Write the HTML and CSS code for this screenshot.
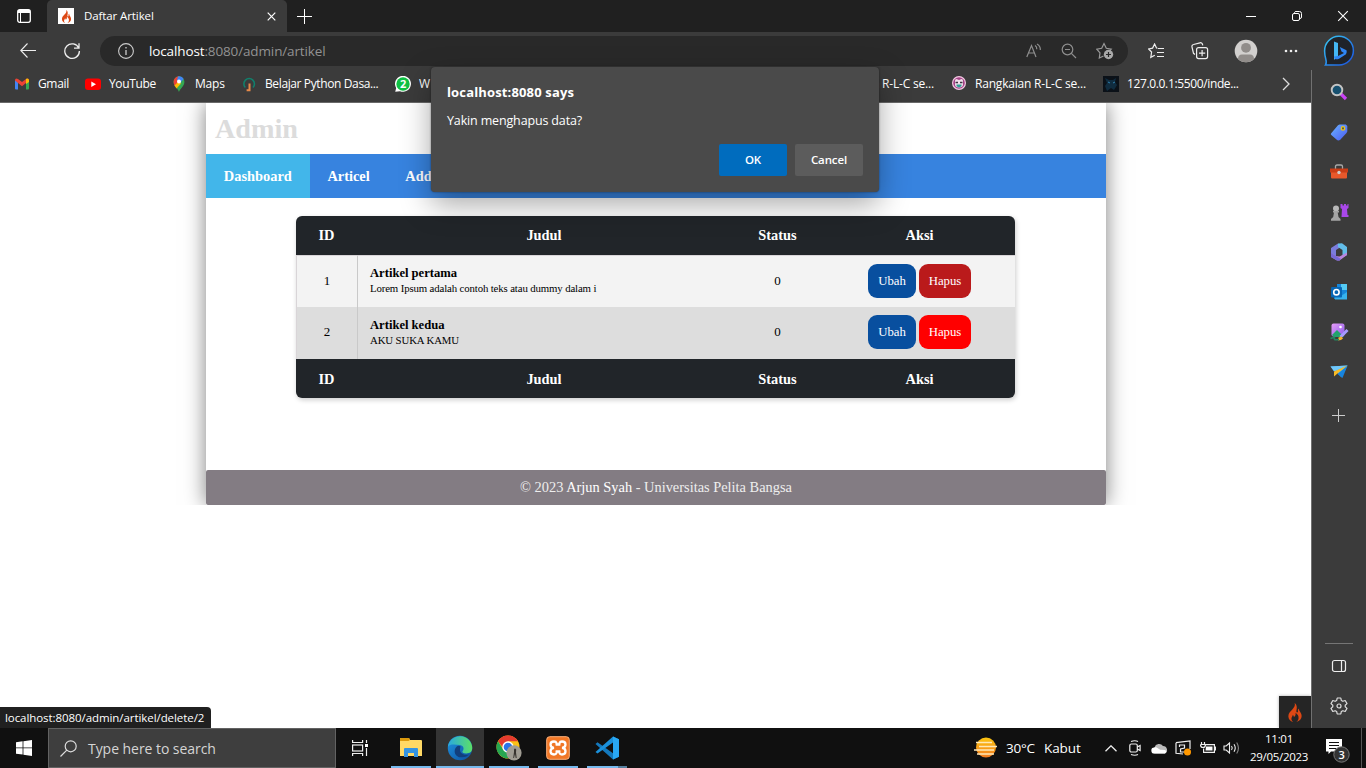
FILE: index.html
```html
<!DOCTYPE html>
<html lang="id">
<head>
<meta charset="utf-8">
<title>Daftar Artikel</title>
<link rel="stylesheet" href="styles.css">
</head>
<body>
<svg width="0" height="0" class="defs">
  <defs>
    <symbol id="flame" viewBox="0 0 16 20"><path d="M7.6 0c.9 2.600-.3 4.300-2 6.300C3.400 8.800 1 10.600 1 13.900 1 17 3.200 19.200 6 20c-1.600-1.200-2.100-2.900-1.500-4.700.4-1.100 1-1.700 1.200-2.800.9.600 1.200 1.500 1.100 2.500 1.500-1.100 2.300-2.700 1.700-4.700 2.400 1.400 3.600 3.700 3.200 6.100-.2 1.500-1 2.600-2.300 3.600 3.500-.9 5.600-3.200 5.600-6.300 0-2.400-1.300-3.900-2.200-5.300-.6-1-.7-1.700-.5-2.600-1 .5-1.500 1.500-1.200 2.700.1.800-.2 1.300-.8 1.400-.8 0-1-.8-.8-1.900C10.200 5 10.300 2 7.600 0Z"/></symbol>
    <linearGradient id="bing" x1="0" y1="0" x2="1" y2="1"><stop offset="0" stop-color="#39c9f2"/><stop offset="1" stop-color="#1a50e0"/></linearGradient>
    <linearGradient id="edge" x1="0" y1="0" x2="1" y2="0"><stop offset="0" stop-color="#2aa8df"/><stop offset="1" stop-color="#5be068"/></linearGradient>
    <linearGradient id="edge-low" x1="0" y1="0" x2="1" y2="1"><stop offset="0" stop-color="#2096e2"/><stop offset="1" stop-color="#0c4e9e"/></linearGradient>
    <linearGradient id="tag" x1="0" y1="0" x2="1" y2="1"><stop offset="0" stop-color="#6bb4ff"/><stop offset="1" stop-color="#4b5bf2"/></linearGradient>
    <linearGradient id="sun" x1="0" y1="0" x2="0" y2="1"><stop offset="0" stop-color="#fcc510"/><stop offset="1" stop-color="#f47b20"/></linearGradient>
    <linearGradient id="purple" x1="0" y1="0" x2="1" y2="1"><stop offset="0" stop-color="#e79cf8"/><stop offset="1" stop-color="#8a5bea"/></linearGradient>
  </defs>
</svg>
<div class="screen">
  <header class="tabs">
    <svg class="workspaces" width="14" height="14" viewBox="0 0 14 14"><rect x=".7" y=".7" width="12.600" height="12.600" rx="2" fill="none" stroke="#fff" stroke-width="1.300"/><path d="M1 1h12v3H1z" fill="#fff"/><path d="M3.500 4v9" stroke="#fff"/></svg>
    <div class="tab">
      <span class="favicon"><svg width="11" height="13"><use href="#flame" fill="#dd4814"/></svg></span>
      <span class="tab-title">Daftar Artikel</span>
      <svg width="9" height="9" viewBox="0 0 9 9" stroke="#fff" stroke-width="1.200"><path d="M.7.7l7.600 7.600M8.300.7.700 8.300"/></svg>
    </div>
    <svg class="new-tab" width="15" height="15" viewBox="0 0 15 15" stroke="#fff"><path d="M7.500 0v15M0 7.500h15"/></svg>
    <div class="window-buttons">
      <svg width="12" height="12" viewBox="0 0 12 12" stroke="#fff"><path d="M1 6.500h10"/></svg>
      <svg width="12" height="12" viewBox="0 0 12 12" stroke="#fff" fill="none"><rect x="1.500" y="3.500" width="7" height="7" rx="1.500"/><path d="M3.500 3V2.500a1.500 1.500 0 0 1 1.500-1h3.500a2 2 0 0 1 2 2V7a1.500 1.500 0 0 1-1.500 1.500"/></svg>
      <svg width="12" height="12" viewBox="0 0 12 12" stroke="#fff" stroke-width="1.100"><path d="M1.200 1.200l9.600 9.600M10.800 1.200l-9.600 9.600"/></svg>
    </div>
  </header>

  <div class="toolbar">
    <svg class="back" width="16" height="16" viewBox="0 0 16 16" fill="none" stroke="#eee" stroke-width="1.100"><path d="M16 7.500H.8M7.500.5.8 7.500l6.700 7"/></svg>
    <svg class="reload" width="18" height="18" viewBox="0 0 18 18" fill="none" stroke="#eee" stroke-width="1.300"><path d="M15.800 6.200A7.300 7.300 0 1 0 16.400 9M16 1.200v5h-5"/></svg>
    <div class="address">
      <svg width="16" height="16" viewBox="0 0 16 16" fill="none" stroke="#ccc" stroke-width="1.100"><circle cx="8" cy="8" r="7.400"/><path d="M8 7v5M8 4v1.500" stroke-width="1.300"/></svg>
      <span class="url"><b>localhost</b>:8080/admin/artikel</span>
      <div class="address-actions">
        <svg width="16" height="16" viewBox="0 0 16 16" fill="none" stroke="#8e8e8e" stroke-width="1.200"><path d="M.8 14 5.500 2.500 10 14M2.400 10h6M9 2.500q2 1.200 1.800 3.700M11 1q3.600 1.800 3.300 6"/></svg>
        <svg width="16" height="16" viewBox="0 0 16 16" fill="none" stroke="#8e8e8e" stroke-width="1.200"><circle cx="6.500" cy="6.500" r="5.300"/><path d="M10.400 10.400l4.600 4.600M4 6.500h5"/></svg>
        <svg width="18" height="18" viewBox="0 0 18 18" fill="none" stroke="#9a9a9a" stroke-width="1.200"><path d="M7.500 14 3.300 16l.7-5.100L.8 7.200l4.900-.9L8 1.600l2.300 4.700 4.900.8-2 2"/><circle cx="12.500" cy="12.500" r="4.700" fill="#a9a9a9" stroke="none"/><path d="M12.500 10v5M10 12.500h5" stroke="#292929"/></svg>
      </div>
    </div>
    <div class="toolbar-actions">
      <svg width="18" height="16" viewBox="0 0 18 16" fill="none" stroke="#eee" stroke-width="1.200"><path d="M9.500 5.300 8.500 5 6.600 1 4.600 5.100l-4 .8 3 3.100-.8 5.300 4-2.100M10 5.500h6M9 9.500h7M9 13.500h7"/></svg>
      <svg width="18" height="18" viewBox="0 0 18 18" fill="none" stroke="#eee" stroke-width="1.200"><path d="M4 12.500 2.500 11.300 1 5a2 2 0 0 1 1.500-2.500L9 .8a2 2 0 0 1 2.500 1.500l.3 1"/><rect x="5.600" y="5.600" width="11" height="11" rx="2"/><path d="M11.100 8v6.200M8 11.100h6.200"/></svg>
      <svg width="24" height="24" viewBox="0 0 24 24"><circle cx="12" cy="12" r="11.300" fill="#d2d0ce"/><circle cx="12" cy="8.800" r="4.900" fill="#918d8a"/><path d="M4 20q0-4.500 4-4.500h8q4 0 4 4.500-3.500 3.300-8 3.300T4 20Z" fill="#918d8a"/></svg>
      <svg width="14" height="4" viewBox="0 0 14 4" fill="#eee"><circle cx="2" cy="2" r="1.300"/><circle cx="7" cy="2" r="1.300"/><circle cx="12" cy="2" r="1.300"/></svg>
    </div>
    <svg class="bing" width="32" height="32" viewBox="0 0 32 32"><path d="M2.500 30C5 26.500 1.600 24 1.600 16A14.400 14.400 0 1 1 16 30Z" fill="#1f2329" stroke="url(#bing)" stroke-width="1.500"/><path d="M11 6.500 15 8v13l-4 4Z" fill="#45b8f5"/><path d="M11 21.500q.5 4 5 2.300l7-4.500q1.300-1.800.5-4L16.800 12l1.700 4.500 2.500 1.500-6 3Z" fill="#2f86f3"/></svg>
  </div>

  <div class="middle">
    <div class="main">
      <nav class="bookmarks">
        <span class="bm gmail"><svg width="16" height="16" viewBox="0 0 16 16"><path d="M1 4h3v9.500H2a1 1 0 0 1-1-1Z" fill="#4285f4"/><path d="M12 4h3v8.500a1 1 0 0 1-1 1h-2Z" fill="#34a853"/><path d="M1 4.500Q1 1.500 4 3l4 3 4-3q3-1.500 3 1.500L8 10.200Z" fill="#ea4335"/><path d="m12 3 1-.5q2 0 2 2v1.400l-3 2Z" fill="#fbbc04"/></svg>Gmail</span>
        <span class="bm youtube"><svg width="16" height="16" viewBox="0 0 16 16"><rect y="2.500" width="16" height="11.500" rx="3" fill="#f00"/><path d="m6.300 5.500 4.700 2.700-4.700 2.700Z" fill="#fff"/></svg>YouTube</span>
        <span class="bm maps"><svg width="16" height="16" viewBox="0 0 16 16"><path d="M8 16c-.5-3-5.400-5.500-5.400-10.300A5.400 5.400 0 0 1 13.400 5.700C13.400 10.500 8.500 13 8 16Z" fill="#34a853"/><path d="M2.600 6A5.400 5.400 0 0 1 8 .3L8 6 4 10.500Q2.600 8 2.600 6Z" fill="#ea4335"/><path d="M7 .4q4-.8 5.700 2.600L8 8 6 4Z" fill="#4285f4"/><path d="m3.500 9.500 4-4 2.500 2-4.500 5Z" fill="#fbbc04"/><circle cx="8" cy="5.600" r="2" fill="#fff"/></svg>Maps</span>
        <span class="bm python"><svg width="16" height="16" viewBox="0 0 16 16" fill="none" stroke-width="1.600"><path d="M4.300 11.500A5.300 5.300 0 1 1 12 11.500" stroke="#11806c"/><path d="M8.500 7.500v6.800H5.600" stroke="#e78a4a" stroke-width="2"/></svg>Belajar Python Dasa...</span>
        <span class="bm whatsapp"><svg width="16" height="16" viewBox="0 0 16 16"><path d="M.2 15.800 1.200 12A8 8 0 1 1 5 15.200Z" fill="#fff"/><circle cx="8" cy="8" r="6.700" fill="#0fc143"/><text x="5" y="12" class="badge-text">2</text></svg>W</span>
        <span class="bm circuit"><svg width="16" height="16" viewBox="0 0 16 16"><circle cx="8" cy="7" r="6.500" fill="#c44b93"/></svg>Rangkaian R-L-C se...</span>
        <span class="bm circuit"><svg width="16" height="16" viewBox="0 0 16 16"><circle cx="8" cy="7" r="6.400" fill="#a34286" stroke="#f1c9e2" stroke-width="1.200"/><path d="M4 5q0-2 1.500-2L8 4l2.500-1Q12 3 12 5v3.500q0 3-4 3t-4-3Z" fill="#f2dfeb"/><path d="M4.500 6.500h2.500M9 6.500h2.500" stroke="#3c3140" stroke-width="1.300"/><path d="M5.500 8.500h5v1.700L8 11.500l-2.500-1.300Z" fill="#2e9f96"/></svg>Rangkaian R-L-C se...</span>
        <span class="bm address-link"><svg width="16" height="16" viewBox="0 0 16 16"><path d="M0 0h16v16H0Z" fill="#0b1118"/><path d="m2 2 4 2h4l3-2-1 4 2 3-3 5-3-2-4 3-2-5 2-3Z" fill="#102c3f"/><path d="m5 6 2 1M10 7l2-1" stroke="#2f82b0"/></svg>127.0.0.1:5500/inde...</span>
        <svg class="more" width="8" height="14" viewBox="0 0 8 14" fill="none" stroke="#ddd" stroke-width="1.300"><path d="m1 1 6 6-6 6"/></svg>
      </nav>
      <div class="viewport">
        <div class="page">
          <div class="container">
            <h1>Admin</h1>
            <div class="menu"><a class="active">Dashboard</a><a>Articel</a><a>Add Articel</a></div>
            <table>
              <thead><tr><th>ID</th><th>Judul</th><th>Status</th><th>Aksi</th></tr></thead>
              <tbody>
                <tr><td>1</td><td class="title"><b>Artikel pertama</b><small>Lorem Ipsum adalah contoh teks atau dummy dalam i</small></td><td>0</td><td class="actions"><a class="edit">Ubah</a><a class="delete">Hapus</a></td></tr>
                <tr><td>2</td><td class="title"><b>Artikel kedua</b><small class="caps">AKU SUKA KAMU</small></td><td>0</td><td class="actions"><a class="edit">Ubah</a><a class="delete hover">Hapus</a></td></tr>
              </tbody>
              <tfoot><tr><th>ID</th><th>Judul</th><th>Status</th><th>Aksi</th></tr></tfoot>
            </table>
            <footer>© 2023 <span>Arjun Syah</span> - Universitas Pelita Bangsa</footer>
          </div>
        </div>
        <div class="status">localhost:8080/admin/artikel/delete/2</div>
        <div class="debug"><svg width="16" height="19"><use href="#flame" fill="#dd4814"/></svg></div>
      </div>
    </div>
    <aside class="sidebar">
      <svg width="20" height="20" viewBox="0 0 20 20"><path d="m12 12 5 5" stroke="#c943f5" stroke-width="3.200"/><circle cx="8" cy="8" r="5.300" fill="#17506f" stroke="#c4c4c4" stroke-width="1.900"/></svg>
      <svg width="20" height="20" viewBox="0 0 20 20"><path d="m2 11.500 7-8.300 1.500-.7h6.300l1.500 1.500v5.500l-.8 1.600L11 18q-2 1-3.500-.5L2.300 13q-.8-.7-.3-1.500Z" fill="url(#tag)"/><circle cx="14" cy="6.400" r="1.700" fill="#555" stroke="#e8c317" stroke-width="1.300"/></svg>
      <svg width="20" height="20" viewBox="0 0 20 20"><path d="M6.500 7V4.500Q6.500 3 8 3h4q1.500 0 1.500 1.500V7" fill="none" stroke="#a9a9a9" stroke-width="1.300"/><rect x="2" y="7" width="16" height="9.500" rx="1" fill="#e8582b"/><path d="M1 6.500h18v4H1z" fill="#c93d17"/><circle cx="10" cy="10.500" r="1.700" fill="#ccc"/></svg>
      <svg width="20" height="20" viewBox="0 0 20 20"><path d="M11.500 2h2v1.500H15V2h2v1.500h1.500V2h1v4l-1.500 1 .5 6h1v2h-7l.5-8-1.500-1Z" fill="#a948ea"/><circle cx="7" cy="6.500" r="3" fill="#b9b9b9"/><path d="M4 9h6v1.500H8.700l.8 4.500 2 2v1.800H2V17l2.200-2 .8-4.500H4Z" fill="#a5a5a5"/></svg>
      <svg width="20" height="20" viewBox="0 0 20 20"><path d="m2 6 7-4.500 3.500 3L7 8v6l-3-.5L2 11Z" fill="#7a7cdb"/><path d="m9 1.500 4-.2L18 5v8l-4.500 2.500V8L9 5Z" fill="#62bde9"/><path d="m2 11 5 3 3.500.5L18 10.500V13l-7.500 5.500H8L2 15Z" fill="#b984dc"/><path d="m2 11 5 3 5 3-1.500 1.500H8L2 15Z" fill="#7569d4"/></svg>
      <svg width="20" height="20" viewBox="0 0 20 20"><path d="M8 2h10v15H5V6h3Z" fill="#1686d9"/><path d="M12 2h6v6h-6Z" fill="#54cbf5"/><path d="m6 10 6 4 6-4v7.500H6Z" fill="#36b2ed"/><rect x="2" y="5" width="11" height="10.500" rx="1" fill="#0866b5"/><circle cx="7.400" cy="10.200" r="2.700" fill="none" stroke="#fff" stroke-width="1.600"/></svg>
      <svg width="20" height="20" viewBox="0 0 20 20"><rect x="2.500" y="1.500" width="13" height="13" rx="2" fill="url(#purple)"/><path d="m3 13 5-5 7 7H5Z" fill="#21a36c"/><circle cx="11.500" cy="5" r="1.300" fill="#fff"/><path d="m18.500 8-7 7" stroke="#a69aff" stroke-width="3"/><path d="m12.500 14.500-3 1-.5 3 3-.5 2-1.500Z" fill="#f3b42b"/><path d="M1.500 16.500q5-2 4 0t4.500 1" fill="none" stroke="#23855f" stroke-width="1.500"/></svg>
      <svg width="20" height="20" viewBox="0 0 20 20"><path d="m1.500 4.500 17-1-6 12-3-3.500Z" fill="#48b2f6"/><path d="m1.500 4.500 17-1L5 9.500Z" fill="#70c8fa"/><path d="m18.500 3.500-5 12.500-5-4Z" fill="#1684df"/><path d="M18.500 3.500 5 9.500v5l3.500-3Z" fill="#f8bb25"/></svg>
      <svg class="add" width="13" height="13" viewBox="0 0 13 13" stroke="#ccc"><path d="M6.500 0v13M0 6.500h13"/></svg>
      <div class="side-bottom">
        <svg width="16" height="16" viewBox="0 0 16 16" fill="none" stroke="#eee" stroke-width="1.200"><rect x="1.500" y="2.500" width="13" height="11" rx="2"/><path d="M10.500 2.500v11"/></svg>
        <svg width="18" height="18" viewBox="0 0 18 18" fill="none" stroke="#ddd" stroke-width="1.200" stroke-linejoin="round"><path d="m7.200 1-.5 2.400-1.600.9-2.300-.8L1 6.600l1.800 1.600v1.600L1 11.400l1.800 3.100 2.300-.8 1.600.9.500 2.400h3.600l.5-2.400 1.600-.9 2.300.8 1.800-3.100-1.800-1.600V8.200L17 6.600l-1.800-3.100-2.300.8-1.600-.9-.5-2.400Z"/><circle cx="9" cy="9" r="2"/></svg>
      </div>
    </aside>
  </div>

  <div class="taskbar">
    <div class="start"><svg width="16" height="16" viewBox="0 0 16 16" fill="#fff"><path d="M0 2.200 6.600 1.300v6.200H0ZM7.400 1.200 16 0v7.500H7.400ZM0 8.300h6.600v6.300L0 13.700ZM7.400 8.300H16V16l-8.600-1.200Z"/></svg></div>
    <div class="search"><svg width="17" height="17" viewBox="0 0 17 17" fill="none" stroke="#ddd" stroke-width="1.200"><circle cx="10.700" cy="6.300" r="5.500"/><path d="M6.800 10.200.5 16.500"/></svg>Type here to search</div>
    <div class="task-view"><svg width="16" height="16" viewBox="0 0 16 16" fill="none" stroke="#eee" stroke-width="1.200"><path d="M.6 0v2.500h10V0M.6 16v-2.500h10V16"/><rect x=".6" y="5" width="10" height="6"/><path d="M14.500 0v3M14.500 8v8"/><path d="M13 4h3v3h-3Z" fill="#fff" stroke="none"/></svg></div>
    <div class="apps">
      <span class="app"><svg width="24" height="24" viewBox="0 0 24 24"><path d="M1 3q0-1 1-1h8l1 2h11q1 0 1 1v15H1Z" fill="#ffd965"/><path d="M1 3q0-1 1-1h8l1 2-1.500 1H1Z" fill="#dc9a0d"/><path d="M5 13q0-1 1-1h12q1 0 1 1v8h-4v-4H9v4H5Z" fill="#3494e2"/></svg></span>
      <span class="app current"><svg width="26" height="26" viewBox="0 0 24 24"><circle cx="12" cy="12" r="11.300" fill="url(#edge-low)"/><path d="M.8 11A11.300 11.300 0 0 1 23.300 12c0 3.500-2.500 5-5.500 5-3 0-4-1-3.500-2.200 1.700-1.300 1.400-5-2.300-5.600C7.500 8.500 2 8 .8 11Z" fill="url(#edge)"/><path d="M9 10.500C4.500 15 8.500 21.500 14 20.500c3 0 5-1 6.500-2.500-3 .8-8 0-8.500-4-.2-1.500.5-2.500.5-3.500-1-.8-2.500-.6-3.500 0Z" fill="#123f7c"/></svg></span>
      <span class="app"><svg class="chrome" width="26" height="26" viewBox="0 0 26 26"><circle cx="12" cy="12" r="11.500" fill="#fbc116"/><path d="M2 6.200A11.500 11.500 0 0 1 22 6.200H12L9 15Z" fill="#e63b2e"/><path d="M2 6.200 7.500 15l4.500 2.500 3 1-3.500 5A11.500 11.500 0 0 1 2 6.200Z" fill="#26a651"/><circle cx="12" cy="12" r="5.700" fill="#fff"/><circle cx="12" cy="12" r="4.300" fill="#2a74e8"/><circle cx="18" cy="17.800" r="7.600" fill="#a09c93"/><path d="M18 14.500q.8-2 2.200 0l-.2 3 .7 5.500h-1l-.7-4-1 4h-.8l.8-6Z" fill="#37332f"/></svg></span>
      <span class="app"><svg width="24" height="24" viewBox="0 0 24 24"><rect x=".7" y=".7" width="22.600" height="22.600" rx="3" fill="#f17726" stroke="#ffb27c" stroke-width="1"/><path d="M8 5.500q-3.500 0-3.500 3T8 11.800q-3.500.5-3.500 3.500t3.500 3.200q2 0 2.500-1.500l.2-1.500h2.600l.2 1.500q.5 1.500 2.500 1.500 3.500 0 3.500-3.200T16 11.800q3.500-.3 3.500-3.300t-3.500-3q-2 0-2.500 1.500l-.2 1.500h-2.600L10.500 7Q10 5.500 8 5.500Z" fill="none" stroke="#fff" stroke-width="2.300"/></svg></span>
      <span class="app vscode"><svg width="26" height="24" viewBox="0 0 26 24"><path d="m19 .5 6 2.700v17.600l-6 2.700L1.500 8l2-1.800L19 17.200Z" fill="#1479bd"/><path d="M19 6.500 3.500 17.500l-2-1.500L19 .5Z" fill="#1b91dc"/><path d="m19 .5 6 2.700v17.600l-6 2.700Z" fill="#29a8f4"/></svg></span>
    </div>
    <div class="tray">
      <svg class="weather" width="24" height="22" viewBox="0 0 24 22"><circle cx="12" cy="10.500" r="10" fill="url(#sun)"/><path d="M2 5.500h16M5 9.500h18M0 13h20M3 17h17" stroke="#ffe8b6" stroke-width="1.700"/></svg>
      <span class="temp">30°C</span><span class="cond">Kabut</span>
      <svg class="up" width="12" height="7" viewBox="0 0 12 7" fill="none" stroke="#eee" stroke-width="1.300"><path d="M.5 6.300 6 .8l5.500 5.500"/></svg>
      <svg class="meet" width="12" height="16" viewBox="0 0 12 16" fill="none" stroke="#eee" stroke-width="1.200"><rect x=".8" y="4" width="7.500" height="8" rx="1.500"/><path d="m8.300 7 2.800-1.500v5L8.300 9M2 1.500q4-1.500 7 0M2 14.500q4 1.500 7 0"/></svg>
      <svg class="cloud" width="17" height="11" viewBox="0 0 17 11"><path d="M3.500 10.500a3.200 3.200 0 0 1 0-6A4.800 4.800 0 0 1 12 3a4 4 0 0 1 2 7.500Z" fill="#bbb"/><path d="M3.500 10.500a3 3 0 0 1-.3-6q2-.7 4 1l2 1.200L14 7q2.500 1.500 0 3.500Z" fill="#fff"/></svg>
      <svg class="sync" width="17" height="16" viewBox="0 0 17 16" fill="none" stroke="#eee" stroke-width="1.200"><path d="M1 2.700 15 1v8M1 2.700v10.600L8 14M4.500 7V5h5v3l-4 1v3h4"/><circle cx="12.500" cy="12" r="3.500" fill="#ff9800" stroke="none"/></svg>
      <svg class="battery" width="16" height="12" viewBox="0 0 16 12" fill="none" stroke="#eee" stroke-width="1.200"><path d="M6 2.600h8.400v7.800H3.600V6.500M15.400 4.500v4M1.500 0v2M4.500 0v2M.5 2.500h5q0 3-2.500 3t-2.500-3"/><path d="M6 4.500h6.500v4H5.500Z" fill="#fff" stroke="none"/></svg>
      <svg class="sound" width="17" height="14" viewBox="0 0 17 14" fill="none" stroke="#eee" stroke-width="1.100"><path d="M1 5h2.200L6.500 2v10L3.200 9H1ZM8.500 5q1.500 2 0 4M11 3.300q2.500 3.700 0 7.400"/><path d="M13.700 1.500q3.500 5.500 0 11" stroke="#888"/></svg>
      <div class="clock"><span>11:01</span><span>29/05/2023</span></div>
      <svg class="notes" width="25" height="25" viewBox="0 0 25 25"><path d="M1 1h16v12.500H6L3.500 16v-2.500H1Z" fill="#fff"/><path d="M4 4.500h10M4 7.500h10M4 10.500h7" stroke="#111" stroke-width="1.200"/><circle cx="16.500" cy="16.500" r="7.700" fill="#333" stroke="#777"/><text x="13.600" y="20.700" class="note-count">3</text></svg>
      <span class="show-desktop"></span>
    </div>
  </div>

  <div class="dialog">
    <strong>localhost:8080 says</strong>
    <p>Yakin menghapus data?</p>
    <div class="dialog-buttons"><button class="ok">OK</button><button>Cancel</button></div>
  </div>
</div>
</body>
</html>
```
FILE: styles.css
```css
* { box-sizing: border-box; }
body { margin: 0; background: #fff; overflow: hidden; font-family: "Open Sans", "Noto Sans", sans-serif; }
svg { flex: none; display: block; }
.defs { position: absolute; }
.screen { position: relative; width: 1366px; height: 768px; display: flex; flex-direction: column; color: #fff; font-size: 12px; }

.tabs { height: 32px; flex: none; background: #202020; display: flex; align-items: center; }
.workspaces { margin-left: 17px; }
.tab { margin-left: 16px; width: 240px; height: 32px; background: #3b3b3b; border-radius: 5px 5px 0 0; display: flex; align-items: center; padding: 0 11px; }
.favicon { width: 16px; height: 16px; background: #fff; display: grid; place-items: center; }
.tab-title { flex: 1; margin: -1px 0 0 10px; font-size: 11.500px; letter-spacing: -.1px; }
.new-tab { margin-left: 10px; }
.window-buttons { margin-left: auto; margin-right: 17px; display: flex; gap: 34px; }

.toolbar { height: 38px; flex: none; background: #3b3b3b; display: flex; align-items: center; }
.back { margin-left: 20px; }
.reload { margin-left: 27px; }
.address { margin-left: 19px; width: 1028px; height: 30px; border-radius: 15px; background: #292929; display: flex; align-items: center; padding: 0 14px 0 18px; }
.url { margin-left: 15px; font-size: 13.500px; letter-spacing: -.13px; color: #929292; flex: 1; }
.url b { color: #fff; font-weight: 400; }
.address-actions { display: flex; gap: 19px; align-items: center; }
.toolbar-actions { margin-left: 20px; display: flex; align-items: center; gap: 25px; }
.toolbar-actions svg:nth-child(4) { margin-left: 1px; }
.bing { margin-left: 25px; }

.middle { flex: 1; display: flex; min-height: 0; }
.main { width: 1311px; flex: none; display: flex; flex-direction: column; }
.bookmarks { height: 33px; flex: none; background: #3b3b3b; border-bottom: 1px solid #696969; padding: 0 21px 5px 14px; display: flex; align-items: center; white-space: nowrap; overflow: hidden; }
.bm { display: flex; align-items: center; gap: 8px; flex: none; letter-spacing: -.2px; }
.gmail { width: 71px; letter-spacing: -.35px; }
.youtube { width: 86px; letter-spacing: -.35px; }
.maps { width: 70px; }
.python { width: 154px; letter-spacing: -.38px; }
.whatsapp { width: 404px; }
.circuit { width: 152px; }
.address-link { letter-spacing: -.36px; }
.more { margin-left: auto; }
.badge-text { font: 700 11px "Open Sans", sans-serif; fill: #fff; }

.viewport { flex: 1; position: relative; background: #fff; overflow: hidden; font-family: "Liberation Serif", serif; }
.page { height: 402px; overflow: hidden; }
.container { width: 900px; height: 402px; margin-left: 206px; box-shadow: 0 0 20px rgba(0,0,0,.5); display: flex; flex-direction: column; }
h1 { margin: 0; height: 51px; padding-left: 9px; font-size: 28.200px; line-height: 52px; color: #dcdcdc; }
.menu { height: 44px; background: #3783df; display: flex; font-size: 14.400px; font-weight: 700; line-height: 44px; }
.menu a { padding: 0 17.800px; }
.menu .active { background: #42b6ea; }
table { width: 719px; margin: 18px 0 0 90px; table-layout: fixed; border-spacing: 0; color: #000; background: #f3f3f3; border-radius: 6px; overflow: hidden; box-shadow: 1px 2px 5px rgba(0,0,0,.2); text-align: center; }
th { height: 39px; padding: 0; background: #212529; color: #fff; font-size: 14.400px; }
tfoot th { padding-top: 2px; }
th:nth-child(1) { width: 61px; }
th:nth-child(2) { width: 374px; }
th:nth-child(3) { width: 93px; }
td { height: 52px; padding: 0 0 2px; font-size: 13px; }
tbody tr:first-child td { border-top: 1px solid #d9d5d8; }
tbody td:first-child { border-left: 1px solid #d9d5d8; }
tbody tr:nth-child(2) { background: #ddd; }
.title { border-left: 1px solid #c9c9c9; padding-left: 12px; text-align: left; line-height: 16px; }
.title b { display: block; font-size: 12.600px; }
.title small { display: block; font-size: 10.800px; line-height: 15px; letter-spacing: -.13px; }
.title .caps { letter-spacing: -.12px; }
.actions a { display: inline-block; height: 34px; line-height: 34px; color: #fff; border-radius: 9px; font-size: 12.800px; vertical-align: middle; }
.edit { width: 48px; margin-right: 3px; background: #084f9f; }
.delete { width: 52px; background: #ba1a1b; }
.delete.hover { background: #f00; }
footer { margin-top: auto; height: 35px; line-height: 35px; background: #837c83; border-radius: 2px; text-align: center; font-size: 14.400px; color: #eee; }
footer span { color: #fff; }
.status { position: absolute; left: 0; bottom: 0; width: 211px; height: 21px; padding-left: 5px; background: #202020; border-radius: 0 4px 0 0; font: 11.500px/21px "Open Sans", sans-serif; letter-spacing: -.07px; }
.debug { position: absolute; right: 0; bottom: 0; width: 32px; height: 32px; background: #252525; display: grid; place-items: center; box-shadow: 0 0 3px #aaa; }

.sidebar { width: 55px; background: #3b3b3b; border-left: 1px solid #717171; display: flex; flex-direction: column; align-items: center; gap: 20px; padding: 12px 1px 0 0; }
.add { margin-top: 7px; }
.side-bottom { margin-top: auto; width: 28px; height: 85px; border-top: 1px solid #757575; display: flex; flex-direction: column; align-items: center; gap: 23px; padding-top: 14px; }

.taskbar { height: 40px; flex: none; background: #101010; display: flex; }
.start { width: 48px; display: grid; place-items: center; }
.search { width: 288px; border: 1px solid #626262; background: #3e3e3e; display: flex; align-items: center; gap: 11px; padding-left: 11px; font-size: 14px; letter-spacing: -.05px; color: #d5d5d5; }
.task-view { width: 48px; display: grid; place-items: center; }
.apps { display: flex; padding-left: 3px; }
.app { width: 48px; margin-right: 1px; display: grid; place-items: center; background: linear-gradient(#76b9ed, #76b9ed) center bottom / 40px 2px no-repeat; }
.app.current { background: linear-gradient(#76b9ed, #76b9ed) center bottom / 48px 2px no-repeat #343434; }
.vscode { background: linear-gradient(90deg, #76b9ed 78%, #56809f 78%) center bottom / 40px 2px no-repeat; }
.tray { flex: 1; display: flex; align-items: center; }
.weather { margin-left: 342px; }
.temp { width: 30px; margin-left: 8px; font-size: 13.500px; letter-spacing: -.25px; }
.cond { width: 37px; margin-left: 8px; font-size: 13.500px; letter-spacing: -.1px; }
.up { margin-left: 24px; }
.meet { margin-left: 12px; }
.cloud { margin-left: 10px; }
.sync { margin-left: 7px; }
.battery { margin-left: 8px; }
.sound { margin-left: 7px; }
.clock { width: 60px; margin-left: 9px; display: flex; flex-direction: column; align-items: center; font-size: 11.500px; line-height: 18px; letter-spacing: -.3px; }
.notes { margin-left: 16px; margin-top: 5px; }
.note-count { font: 600 11px "Open Sans", sans-serif; fill: #fff; }
.show-desktop { width: 5px; height: 40px; margin-left: auto; border-left: 1px solid #555; }

.dialog { position: absolute; left: 431px; top: 67px; width: 448px; height: 125px; background: #4a4a4a; border-radius: 4px; padding: 16px; box-shadow: 0 0 2px rgba(0,0,0,.5), 0 12px 30px rgba(0,0,0,.35); display: flex; flex-direction: column; }
.dialog strong { font-size: 13px; line-height: 18px; letter-spacing: .15px; }
.dialog p { margin: 11px 0 0; font-size: 12.500px; line-height: 18px; letter-spacing: -.15px; }
.dialog-buttons { display: flex; justify-content: flex-end; gap: 8px; margin-top: auto; }
button { width: 68px; height: 32px; border: 0; border-radius: 2px; padding: 0 0 2px; background: #5c5c5c; color: #fff; font: 600 11.500px "Open Sans", sans-serif; letter-spacing: -.1px; }
.ok { background: #006cbe; }
```
